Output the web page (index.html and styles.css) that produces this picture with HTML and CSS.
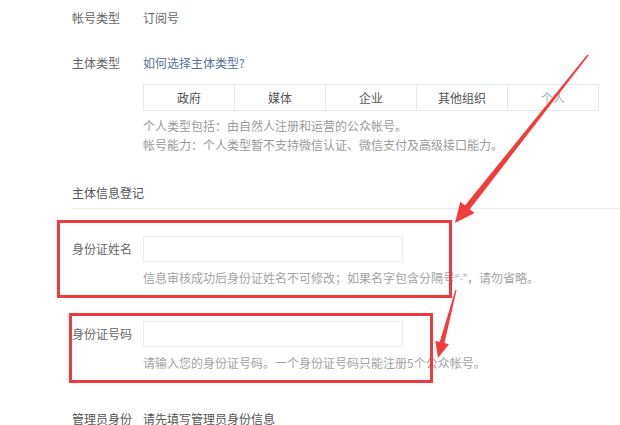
FILE: index.html
```html
<!DOCTYPE html>
<html lang="zh-CN">
<head>
<meta charset="utf-8">
<title>主体信息登记</title>
<link rel="stylesheet" href="styles.css">
</head>
<body>
<div class="page">
  <div class="row r-type">
    <div class="label">帐号类型</div>
    <div class="value">订阅号</div>
  </div>
  <div class="row r-subject">
    <div class="label">主体类型</div>
    <div class="content">
      <a class="link" href="#">如何选择主体类型?</a>
      <div class="seg">
        <div class="cell">政府</div>
        <div class="cell">媒体</div>
        <div class="cell">企业</div>
        <div class="cell">其他组织</div>
        <div class="cell sel">个人</div>
      </div>
      <div class="note">个人类型包括：由自然人注册和运营的公众帐号。</div>
      <div class="note">帐号能力：个人类型暂不支持微信认证、微信支付及高级接口能力。</div>
    </div>
  </div>
  <div class="section">主体信息登记</div>
  <div class="row field f1">
    <div class="label mid">身份证姓名</div>
    <div class="content">
      <div class="input"></div>
      <div class="hint">信息审核成功后身份证姓名不可修改；如果名字包含分隔号<span class="latin">“·”</span>，请勿省略。</div>
    </div>
  </div>
  <div class="row field f2">
    <div class="label mid">身份证号码</div>
    <div class="content">
      <div class="input"></div>
      <div class="hint">请输入您的身份证号码。一个身份证号码只能注册5个公众帐号。</div>
    </div>
  </div>
  <div class="row r-admin">
    <div class="label">管理员身份</div>
    <div class="value">请先填写管理员身份信息</div>
  </div>
</div>
<div class="mark mark1"></div>
<div class="mark mark2"></div>
<svg class="arrows" width="620" height="425" viewBox="0 0 620 425">
  <polygon points="587.4,54.6 465.0,205.4 460.3,201.7 455,223 474.5,212.9 469.8,209.2 588.6,55.4" fill="#f23b3b"/>
  <polygon points="455.4,289.9 439.7,341.9 435.3,340.7 438,358 448.9,344.3 444.5,343.1 456.6,290.1" fill="#f23b3b"/>
</svg>
</body>
</html>
```
FILE: styles.css
```css
html, body {
  margin: 0;
  padding: 0;
  background: #fff;
}
body {
  width: 620px;
  height: 425px;
  overflow: hidden;
  position: relative;
  font-family: "Noto Sans CJK SC", "Noto Sans", sans-serif;
  font-size: 12px;
  line-height: 19px;
  color: #555;
}
.page {
  padding: 8px 0 0 72px;
}
.row {
  display: flex;
  align-items: flex-start;
}
.label {
  width: 71px;
  flex-shrink: 0;
  color: #666;
}
.label.mid {
  line-height: 26px;
}
.value {
  color: #666;
}
.content {
  display: flex;
  flex-direction: column;
}
.r-subject {
  margin-top: 26px;
}
.link {
  color: #5b6fa0;
  text-decoration: none;
}
.seg {
  display: flex;
  width: 456px;
  margin-top: 12px;
  margin-bottom: 5px;
  border: 1px solid #e6e9ec;
  box-sizing: border-box;
}
.cell {
  flex: 1;
  text-align: center;
  line-height: 25px;
  color: #555;
  border-left: 1px solid #e6e9ec;
}
.cell:first-child {
  border-left: none;
}
.cell.sel {
  color: #a3abc0;
}
.note {
  color: #9a9a9a;
}
.section {
  margin-top: 29px;
  padding-bottom: 6px;
  border-bottom: 1px solid #ececec;
  color: #555;
}
.f1 {
  margin-top: 27px;
}
.f2 {
  margin-top: 32px;
}
.input {
  width: 260px;
  height: 26px;
  box-sizing: border-box;
  border: 1px solid #ececee;
  background: #fff;
}
.hint {
  margin-top: 6px;
  color: #a3a3a3;
}
.latin {
  font-family: "Liberation Sans", sans-serif;
}
.r-admin {
  margin-top: 37px;
}
.r-admin .label, .r-admin .value {
  color: #555;
}
.mark {
  position: absolute;
  border: 3px solid #ee3b40;
  box-sizing: border-box;
}
.mark1 {
  left: 57px;
  top: 220px;
  width: 395px;
  height: 78px;
}
.mark2 {
  left: 69px;
  top: 313px;
  width: 364px;
  height: 70px;
}
.arrows {
  position: absolute;
  left: 0;
  top: 0;
  pointer-events: none;
}
```
